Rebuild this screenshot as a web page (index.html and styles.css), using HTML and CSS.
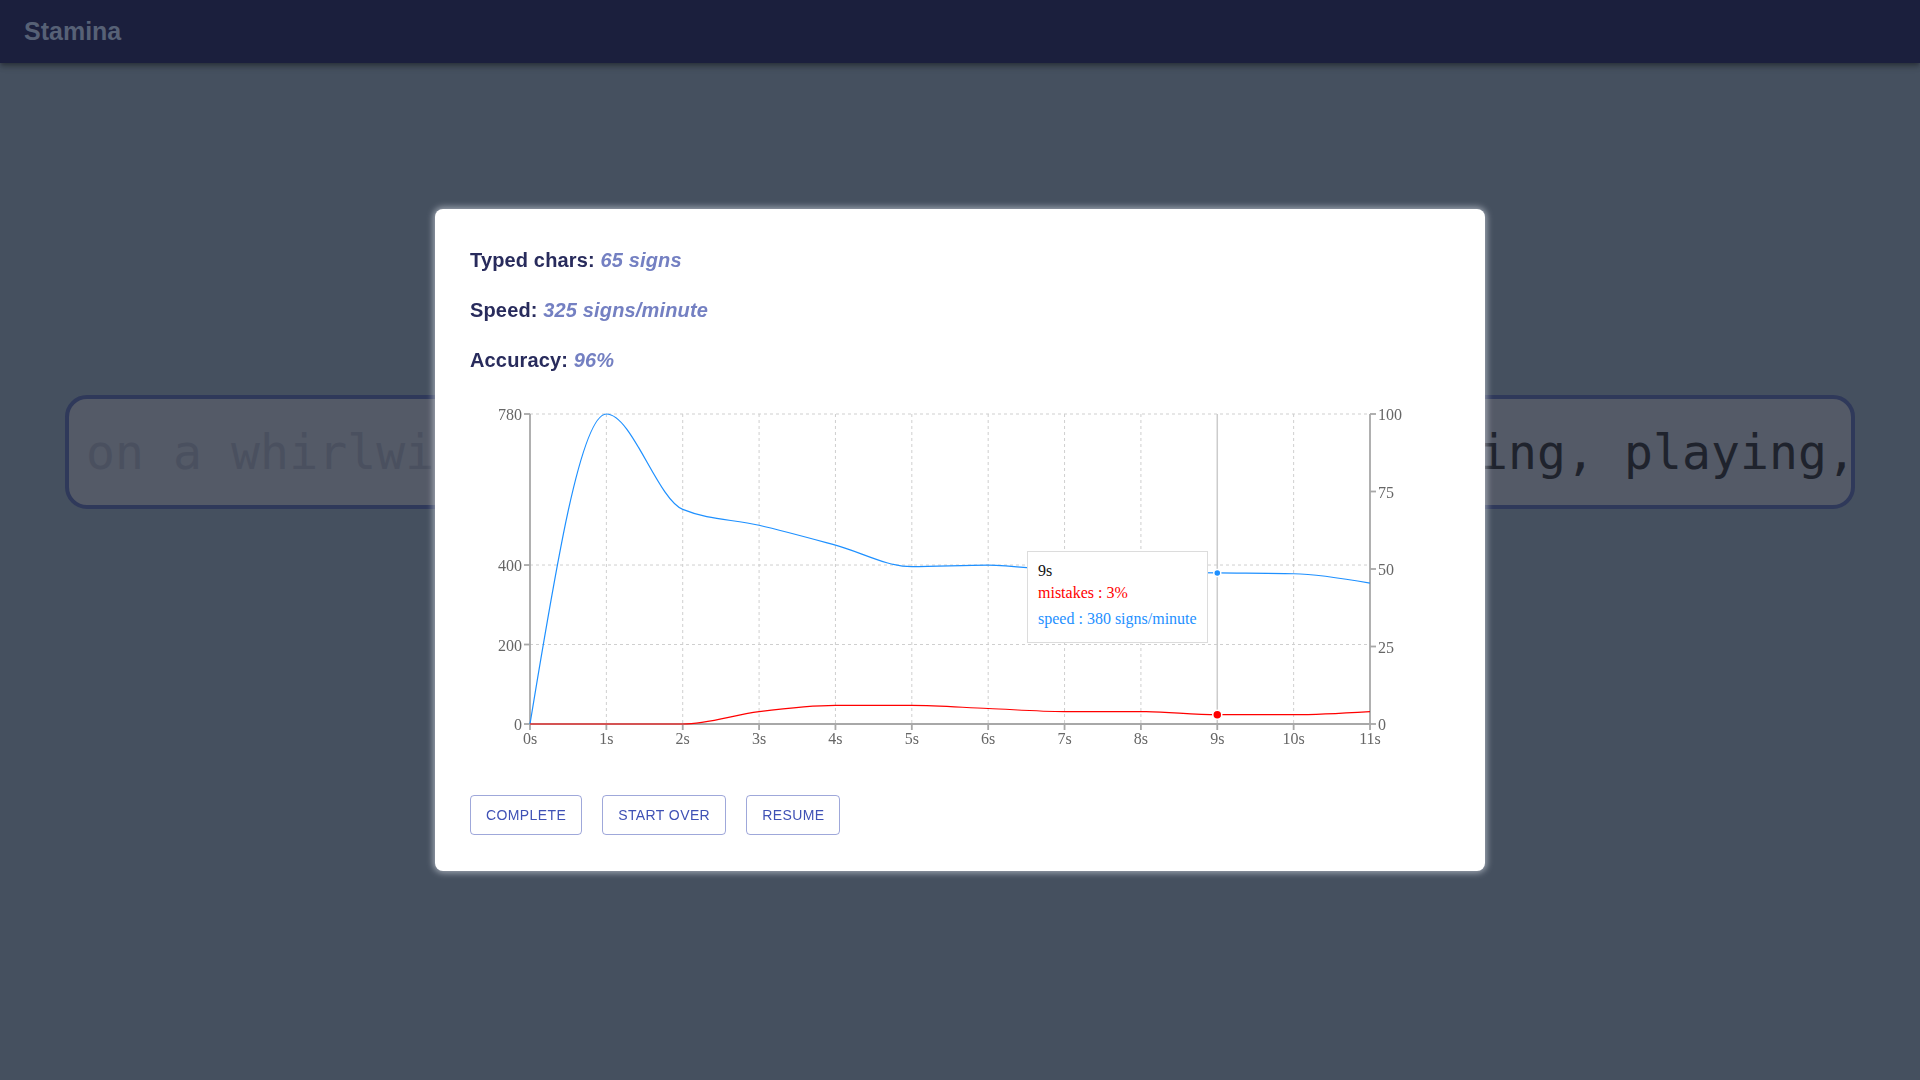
FILE: index.html
```html
<!DOCTYPE html>
<html lang="en">
<head>
<meta charset="utf-8">
<title>Stamina</title>
<link rel="stylesheet" href="styles.css">
</head>
<body>
<header class="appbar">
  <h1 class="appbar-title">Stamina</h1>
</header>
<main class="main">
  <div class="typing-field"><span class="typed">on a whirlwind tour of dancing, laughing, </span><span class="pending">traveling, playing, and exploring the world</span></div>
</main>

<div class="backdrop">
  <section class="modal">
    <p class="stat">Typed chars: <span class="stat-value">65 signs</span></p>
    <p class="stat">Speed: <span class="stat-value">325 signs/minute</span></p>
    <p class="stat">Accuracy: <span class="stat-value">96%</span></p>

    <div class="chart">
      <svg width="980" height="350" viewBox="0 0 980 350" class="chart-svg">
        <g class="grid">
          <line x1="60" y1="14" x2="900" y2="14"/>
          <line x1="60" y1="165.03" x2="900" y2="165.03"/>
          <line x1="60" y1="244.51" x2="900" y2="244.51"/>
          <line x1="136.36" y1="14" x2="136.36" y2="324"/>
          <line x1="212.73" y1="14" x2="212.73" y2="324"/>
          <line x1="289.09" y1="14" x2="289.09" y2="324"/>
          <line x1="365.45" y1="14" x2="365.45" y2="324"/>
          <line x1="441.82" y1="14" x2="441.82" y2="324"/>
          <line x1="518.18" y1="14" x2="518.18" y2="324"/>
          <line x1="594.55" y1="14" x2="594.55" y2="324"/>
          <line x1="670.91" y1="14" x2="670.91" y2="324"/>
          <line x1="823.64" y1="14" x2="823.64" y2="324"/>
        </g>

        <line class="cursor" x1="747.27" y1="14" x2="747.27" y2="324"/>

        <g class="axis">
          <line x1="60" y1="14" x2="60" y2="330"/>
          <line x1="60" y1="324" x2="900" y2="324"/>
          <line x1="900" y1="14" x2="900" y2="330"/>
          <line x1="54" y1="14" x2="60" y2="14"/>
          <line x1="54" y1="165.03" x2="60" y2="165.03"/>
          <line x1="54" y1="244.51" x2="60" y2="244.51"/>
          <line x1="54" y1="324" x2="60" y2="324"/>
          <line x1="900" y1="14" x2="906" y2="14"/>
          <line x1="900" y1="91.5" x2="906" y2="91.5"/>
          <line x1="900" y1="169" x2="906" y2="169"/>
          <line x1="900" y1="246.5" x2="906" y2="246.5"/>
          <line x1="900" y1="324" x2="906" y2="324"/>
          <line x1="136.36" y1="324" x2="136.36" y2="330"/>
          <line x1="212.73" y1="324" x2="212.73" y2="330"/>
          <line x1="289.09" y1="324" x2="289.09" y2="330"/>
          <line x1="365.45" y1="324" x2="365.45" y2="330"/>
          <line x1="441.82" y1="324" x2="441.82" y2="330"/>
          <line x1="518.18" y1="324" x2="518.18" y2="330"/>
          <line x1="594.55" y1="324" x2="594.55" y2="330"/>
          <line x1="670.91" y1="324" x2="670.91" y2="330"/>
          <line x1="747.27" y1="324" x2="747.27" y2="330"/>
          <line x1="823.64" y1="324" x2="823.64" y2="330"/>
        </g>

        <g class="tick-labels left">
          <text x="52" y="14" dy="0.355em">780</text>
          <text x="52" y="165.5" dy="0.355em">400</text>
          <text x="52" y="245.3" dy="0.355em">200</text>
          <text x="52" y="324" dy="0.355em">0</text>
        </g>
        <g class="tick-labels right">
          <text x="908" y="14" dy="0.355em">100</text>
          <text x="908" y="92.3" dy="0.355em">75</text>
          <text x="908" y="169.5" dy="0.355em">50</text>
          <text x="908" y="247.3" dy="0.355em">25</text>
          <text x="908" y="324" dy="0.355em">0</text>
        </g>
        <g class="tick-labels bottom">
          <text x="60" y="333" dy="0.71em">0s</text>
          <text x="136.36" y="333" dy="0.71em">1s</text>
          <text x="212.73" y="333" dy="0.71em">2s</text>
          <text x="289.09" y="333" dy="0.71em">3s</text>
          <text x="365.45" y="333" dy="0.71em">4s</text>
          <text x="441.82" y="333" dy="0.71em">5s</text>
          <text x="518.18" y="333" dy="0.71em">6s</text>
          <text x="594.55" y="333" dy="0.71em">7s</text>
          <text x="670.91" y="333" dy="0.71em">8s</text>
          <text x="747.27" y="333" dy="0.71em">9s</text>
          <text x="823.64" y="333" dy="0.71em">10s</text>
          <text x="900" y="333" dy="0.71em">11s</text>
        </g>

        <path id="speed-line" class="line speed" d=""/>
        <path id="mistakes-line" class="line mistakes" d=""/>

        <circle class="dot speed" cx="747.27" cy="172.97" r="3.5"/>
        <circle class="dot mistakes" cx="747.27" cy="314.7" r="4.5"/>
      </svg>

      <div class="tooltip">
        <p class="tooltip-label">9s</p>
        <ul class="tooltip-items">
          <li class="tooltip-item mistakes">mistakes : 3%</li>
          <li class="tooltip-item speed">speed : 380 signs/minute</li>
        </ul>
      </div>
    </div>

    <div class="actions">
      <button class="btn">Complete</button>
      <button class="btn">Start over</button>
      <button class="btn">Resume</button>
    </div>
  </section>
</div>
<script src="script.js"></script>
</body>
</html>
```

FILE: styles.css
```css
* { box-sizing: border-box; }

html, body {
  margin: 0;
  height: 100%;
}

body {
  background: #45505f;
  font-family: "Liberation Sans", Arial, sans-serif;
  overflow: hidden;
}

.appbar {
  position: relative;
  z-index: 1;
  height: 63px;
  display: flex;
  align-items: center;
  padding: 0 24px;
  background: #1b1f3d;
  box-shadow: 0 2px 4px -1px rgba(0, 0, 0, 0.25), 0 4px 5px 0 rgba(0, 0, 0, 0.16), 0 1px 10px 0 rgba(0, 0, 0, 0.14);
}

.appbar-title {
  margin: 0;
  font-size: 25px;
  font-weight: 700;
  color: #576176;
}

.main {
  padding: 332px 65px 0;
}

.typing-field {
  height: 114px;
  border: 4px solid #2f395a;
  border-radius: 22px;
  background: #545a67;
  padding: 0 16px 0 17px;
  overflow: hidden;
  white-space: nowrap;
  font-family: "DejaVu Sans Mono", monospace;
  font-size: 48px;
  letter-spacing: 0.12px;
  line-height: 106px;
}

.typed { color: #4a505f; }
.pending { color: #1f232d; }

.backdrop {
  position: fixed;
  inset: 0;
  z-index: 2;
  display: flex;
  align-items: center;
  justify-content: center;
}

.modal {
  width: 1050px;
  background: #fff;
  border-radius: 8px;
  padding: 40px 35px 36px;
  box-shadow: 0 0 6px 2px rgba(215, 220, 230, 0.6);
}

.stat {
  margin: 0 0 27px;
  font-size: 20px;
  line-height: 23px;
  font-weight: 700;
  letter-spacing: 0.15px;
  color: #282b5c;
}

.stat:nth-of-type(3) { margin-bottom: 0; }

.stat-value {
  font-style: italic;
  color: #7480c2;
}

.chart {
  position: relative;
  margin-top: 28px;
  height: 350px;
}

.chart-svg { display: block; }

.grid line {
  stroke: #cfcfcf;
  stroke-width: 1;
  stroke-dasharray: 3 3;
}

.cursor {
  stroke: #cccccc;
  stroke-width: 1.5;
}

.axis line {
  stroke: #a8a8a8;
  stroke-width: 1.8;
}

.tick-labels text {
  font-family: "Liberation Serif", "Times New Roman", serif;
  font-size: 16px;
  fill: #666;
}

.tick-labels.left text { text-anchor: end; }
.tick-labels.right text { text-anchor: start; }
.tick-labels.bottom text { text-anchor: middle; }

.line {
  fill: none;
  stroke-width: 1.2;
}

.line.speed { stroke: #1e90ff; }
.line.mistakes { stroke: #ff0000; }

.dot { stroke: #fff; stroke-width: 1.5; }
.dot.speed { fill: #1e90ff; }
.dot.mistakes { fill: #ff0000; }

.tooltip {
  position: absolute;
  left: 557px;
  top: 151px;
  background: #fff;
  border: 1px solid #dcdcdc;
  padding: 10px;
  white-space: nowrap;
  font-family: "Liberation Serif", "Times New Roman", serif;
  font-size: 16px;
}

.tooltip-label {
  margin: 0;
  color: #111;
  font-weight: 400;
}

.tooltip-items {
  list-style: none;
  margin: 0;
  padding: 0;
}

.tooltip-item {
  display: block;
  padding: 4px 0;
}

.tooltip-item.mistakes { color: #ff0000; }
.tooltip-item.speed { color: #1e90ff; }

.actions {
  display: flex;
  gap: 20px;
  margin-top: 45px;
}

.btn {
  height: 40px;
  padding: 0 15px;
  border: 1px solid rgba(63, 81, 181, 0.5);
  border-radius: 4px;
  background: transparent;
  color: #3f51b5;
  font-family: "Liberation Sans", Arial, sans-serif;
  font-size: 14px;
  letter-spacing: 0.4px;
  text-transform: uppercase;
  cursor: pointer;
}
```

FILE: script.js
```javascript
(function () {
  var speed = [0, 780, 540, 500, 450, 396, 400, 385.7, 382.5, 380, 378, 354.5];
  var mistakes = [0, 0, 0, 4, 6, 6, 5, 4, 4, 3, 3, 4];

  function xAt(i) { return 60 + i * 840 / 11; }
  function ySpeed(v) { return 324 - v * 310 / 780; }
  function yPct(p) { return 324 - p * 3.1; }

  function sign(x) { return x < 0 ? -1 : 1; }

  // d3 curveMonotoneX
  function monotone(points) {
    var out = "";
    var x0, y0, x1, y1, t0, state = 0;
    function f(n) { return Math.round(n * 100) / 100; }
    function seg(ta, tb) {
      var dx = (x1 - x0) / 3;
      out += "C" + f(x0 + dx) + "," + f(y0 + dx * ta) + "," + f(x1 - dx) + "," + f(y1 - dx * tb) + "," + f(x1) + "," + f(y1);
    }
    function slope3(x2, y2) {
      var h0 = x1 - x0, h1 = x2 - x1,
        s0 = (y1 - y0) / h0, s1 = (y2 - y1) / h1,
        p = (s0 * h1 + s1 * h0) / (h0 + h1);
      return (sign(s0) + sign(s1)) * Math.min(Math.abs(s0), Math.abs(s1), 0.5 * Math.abs(p)) || 0;
    }
    function slope2(t) {
      var h = x1 - x0;
      return h ? (3 * (y1 - y0) / h - t) / 2 : t;
    }
    points.forEach(function (pt) {
      var x = pt[0], y = pt[1], t1 = NaN;
      if (state === 0) { state = 1; out += "M" + f(x) + "," + f(y); }
      else if (state === 1) { state = 2; }
      else if (state === 2) { state = 3; t1 = slope3(x, y); seg(slope2(t1), t1); }
      else { t1 = slope3(x, y); seg(t0, t1); }
      x0 = x1; x1 = x; y0 = y1; y1 = y; t0 = t1;
    });
    if (state === 2) out += "L" + f(x1) + "," + f(y1);
    else if (state === 3) seg(t0, slope2(t0));
    return out;
  }

  document.getElementById("speed-line").setAttribute("d",
    monotone(speed.map(function (v, i) { return [xAt(i), ySpeed(v)]; })));
  document.getElementById("mistakes-line").setAttribute("d",
    monotone(mistakes.map(function (v, i) { return [xAt(i), yPct(v)]; })));
})();
```
